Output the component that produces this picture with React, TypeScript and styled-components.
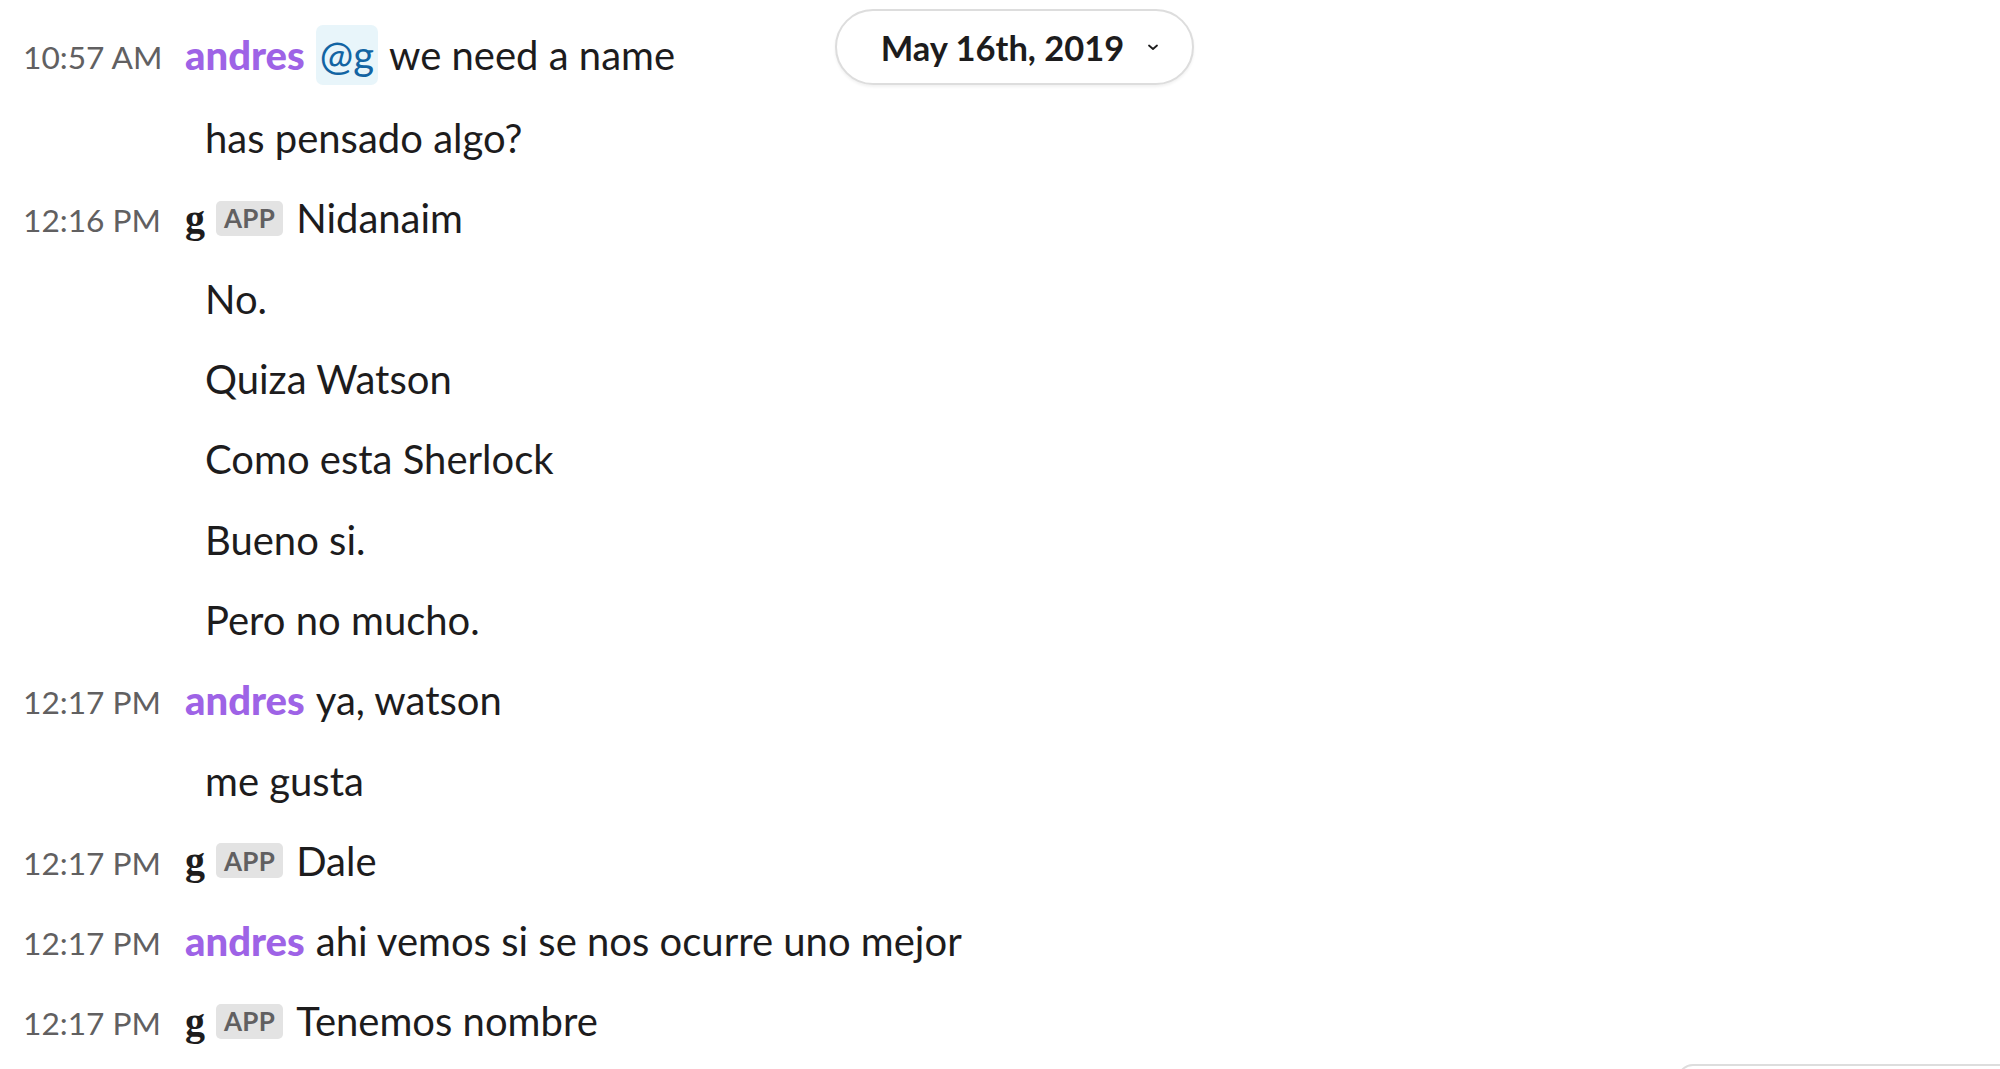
import React from "react";
import styled, { createGlobalStyle } from "styled-components";

const GlobalStyle = createGlobalStyle`
  html, body {
    margin: 0;
    padding: 0;
    background: #ffffff;
  }
  body {
    font-family: Lato, "Noto Sans", "Liberation Sans", sans-serif;
    color: #1d1c1d;
    -webkit-font-smoothing: antialiased;
  }
`;

type Part = { kind: "text" | "mention"; value: string };

type Message = {
  time?: string;
  author?: string;
  app?: boolean;
  parts: Part[];
};

const messages: Message[] = [
  { time: "10:57 AM", author: "andres", parts: [{ kind: "mention", value: "@g" }, { kind: "text", value: "we need a name" }] },
  { parts: [{ kind: "text", value: "has pensado algo?" }] },
  { time: "12:16 PM", author: "g", app: true, parts: [{ kind: "text", value: "Nidanaim" }] },
  { parts: [{ kind: "text", value: "No." }] },
  { parts: [{ kind: "text", value: "Quiza Watson" }] },
  { parts: [{ kind: "text", value: "Como esta Sherlock" }] },
  { parts: [{ kind: "text", value: "Bueno si." }] },
  { parts: [{ kind: "text", value: "Pero no mucho." }] },
  { time: "12:17 PM", author: "andres", parts: [{ kind: "text", value: "ya, watson" }] },
  { parts: [{ kind: "text", value: "me gusta" }] },
  { time: "12:17 PM", author: "g", app: true, parts: [{ kind: "text", value: "Dale" }] },
  { time: "12:17 PM", author: "andres", parts: [{ kind: "text", value: "ahi vemos si se nos ocurre uno mejor" }] },
  { time: "12:17 PM", author: "g", app: true, parts: [{ kind: "text", value: "Tenemos nombre" }] },
];

export default () => {
  return (
    <>
      <GlobalStyle />
      <Channel>
        <DatePill>
          <span>May 16th, 2019</span>
          <svg width="14" height="10" viewBox="0 0 14 10" fill="none">
            <path d="M3 3.5 L7 7 L11 3.5" stroke="#1d1c1d" strokeWidth="1.8" strokeLinecap="round" strokeLinejoin="round" />
          </svg>
        </DatePill>
        {messages.map((m, i) => (
          <Row key={i} $tall={m.parts.some((p) => p.kind === "mention")}>
            <Time>{m.time}</Time>
            <Body $continued={!m.author}>
              {m.author && <Author $bot={!!m.app}>{m.author}</Author>}
              {m.app && <AppBadge>APP</AppBadge>}
              {m.parts.map((p, j) =>
                p.kind === "mention" ? (
                  <Mention key={j}>{p.value}</Mention>
                ) : (
                  <span key={j}>{p.value}</span>
                )
              )}
            </Body>
          </Row>
        ))}
        <Composer />
      </Channel>
    </>
  );
};

const Channel = styled.div`
  position: relative;
  height: 1069px;
  overflow: hidden;
  padding-top: 12px;
  box-sizing: border-box;
`;

const Row = styled.div<{ $tall: boolean }>`
  display: grid;
  grid-template-columns: 185px 1fr;
  align-items: center;
  height: ${(p) => (p.$tall ? "86px" : "80.3px")};
`;

const Time = styled.div`
  padding-left: 23px;
  padding-top: 4px;
  font-size: 31.7px;
  color: #616061;
  white-space: nowrap;
`;

const Body = styled.div<{ $continued: boolean }>`
  display: flex;
  align-items: center;
  gap: 11px;
  font-size: 40px;
  color: #1d1c1d;
  white-space: nowrap;
  padding-left: ${(p) => (p.$continued ? "20px" : "0")};
`;

const Author = styled.span<{ $bot: boolean }>`
  font-weight: 900;
  color: ${(p) => (p.$bot ? "#1d1c1d" : "#9e63e6")};
  font-family: ${(p) => (p.$bot ? '"Liberation Serif", "DejaVu Serif", serif' : "Lato, sans-serif")};
`;

const AppBadge = styled.span`
  display: inline-flex;
  align-items: center;
  justify-content: center;
  height: 35px;
  padding: 0 8px;
  border-radius: 5px;
  background: #e3e3e3;
  color: #616061;
  font-size: 26px;
  font-weight: 700;
  letter-spacing: 0.3px;
  margin-right: 2px;
`;

const Mention = styled.span`
  display: inline-flex;
  align-items: center;
  height: 60px;
  padding: 0 4px;
  border-radius: 7px;
  background: #e8f5fa;
  color: #1264a3;
`;

const DatePill = styled.div`
  position: absolute;
  left: 835px;
  top: 9px;
  width: 359px;
  height: 76px;
  box-sizing: border-box;
  padding-left: 12px;
  border: 2px solid #dddddd;
  border-radius: 38px;
  background: #ffffff;
  box-shadow: 0 2px 3px rgba(0, 0, 0, 0.06);
  display: flex;
  align-items: center;
  justify-content: center;
  gap: 22px;
  font-size: 34.5px;
  font-weight: 700;
  color: #1d1c1d;
`;

const Composer = styled.div`
  position: absolute;
  left: 1677px;
  top: 1064px;
  right: -20px;
  height: 80px;
  border: 2px solid #dddddd;
  border-radius: 16px;
  background: #ffffff;
`;
